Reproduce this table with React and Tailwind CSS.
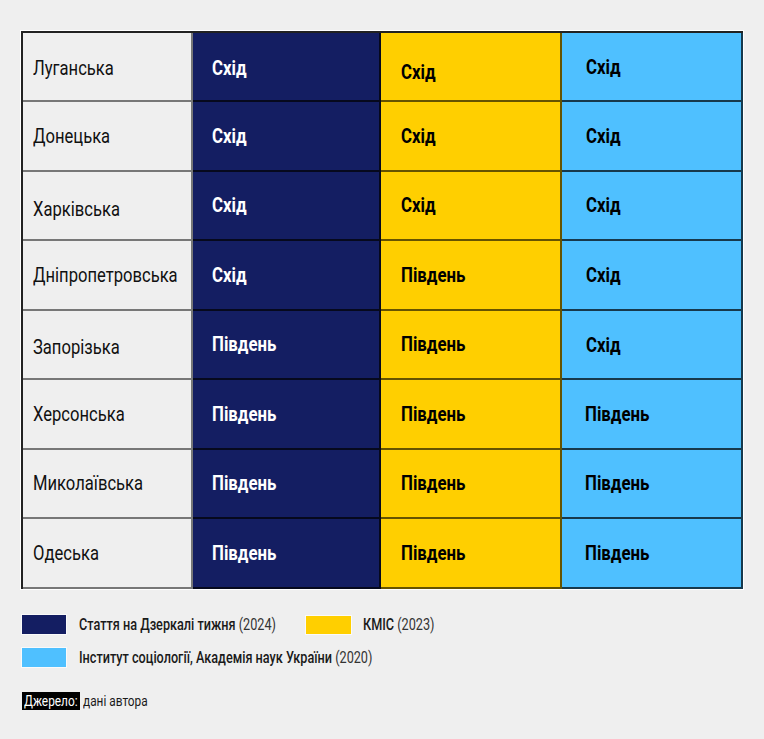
import React from "react";

const rows = [
  { name: "Луганська", a: "Схід", b: "Схід", c: "Схід", n: "pt-[3px]", sa: "pt-[3px]", sb: "pt-[12px]", sc: "pt-[2px]" },
  { name: "Донецька", a: "Схід", b: "Схід", c: "Схід", n: "", sa: "", sb: "", sc: "" },
  { name: "Харківська", a: "Схід", b: "Схід", c: "Схід", n: "pt-[7px]", sa: "", sb: "", sc: "" },
  { name: "Дніпропетровська", a: "Схід", b: "Південь", c: "Схід", n: "", sa: "", sb: "", sc: "" },
  { name: "Запорізька", a: "Південь", b: "Південь", c: "Схід", n: "pt-[5px]", sa: "", sb: "", sc: "pt-[2px]" },
  { name: "Херсонська", a: "Південь", b: "Південь", c: "Південь", n: "", sa: "", sb: "", sc: "" },
  { name: "Миколаївська", a: "Південь", b: "Південь", c: "Південь", n: "", sa: "", sb: "", sc: "" },
  { name: "Одеська", a: "Південь", b: "Південь", c: "Південь", n: "", sa: "", sb: "", sc: "" },
];

const heights = ["h-[69px]", "h-[70px]", "h-[69px]", "h-[70px]", "h-[69px]", "h-[70px]", "h-[69px]", "h-[70px]"];

function Cond({ children, kind = "reg" }) {
  const s = kind === "bold" ? "scale-x-[0.80]" : kind === "legend" ? "scale-x-[0.745]" : "scale-x-[0.79]";
  return <span className={"inline-block origin-left whitespace-nowrap " + s}>{children}</span>;
}

export default function App() {
  return (
    <div
      className="w-[764px] h-[739px] bg-[#efefef] pt-[31px] pl-[21px]"
      style={{ fontFamily: "Roboto, 'Liberation Sans', sans-serif" }}
    >
      <div className="w-[722px] border-l-2 border-t-2 border-[#222] ring-1 ring-white grid grid-cols-[170px_188px_181px_181px]">
        {rows.map((r, i) => (
          <React.Fragment key={r.name}>
            <div className={`${heights[i]} ${r.n} bg-[#efefef] border-r-2 border-b-2 border-black/50 flex items-center pl-[10px] text-[21px] text-[#111] leading-none`}>
              <Cond>{r.name}</Cond>
            </div>
            <div className={`${heights[i]} ${r.sa} bg-[#141e62] border-r-2 border-b-2 border-black/70 flex items-center pl-[19px] text-[21px] font-bold text-white leading-none`}>
              <Cond kind="bold">{r.a}</Cond>
            </div>
            <div className={`${heights[i]} ${r.sb} bg-[#ffcf00] border-r-2 border-b-2 border-black/60 flex items-center pl-[20px] text-[21px] font-bold text-black leading-none`}>
              <Cond kind="bold">{r.b}</Cond>
            </div>
            <div className={`${heights[i]} ${r.sc} bg-[#4fc0ff] border-r-2 border-b-2 border-black/70 flex items-center ${r.c === "Схід" ? "pl-[24px]" : "pl-[23px]"} text-[21px] font-bold text-black leading-none`}>
              <Cond kind="bold">{r.c}</Cond>
            </div>
          </React.Fragment>
        ))}
      </div>

      <div className="mt-[26px] flex flex-col gap-[14px] text-[17px] text-[#1a1a1a] leading-none">
        <div className="flex items-center">
          <div className="w-[44px] h-[19px] bg-[#141e62] ring-1 ring-white/70 ml-[1px]" />
          <div className="ml-[13px] w-[227px]">
            <Cond kind="legend">
              <span className="font-medium">Стаття на Дзеркалі тижня</span> <span className="text-[#333]">(2024)</span>
            </Cond>
          </div>
          <div className="w-[45px] h-[18px] bg-[#ffcf00] ring-1 ring-white/70" />
          <div className="ml-[12px]">
            <Cond kind="legend">
              <span className="font-medium">КМІС</span> <span className="text-[#333]">(2023)</span>
            </Cond>
          </div>
        </div>
        <div className="flex items-center">
          <div className="w-[44px] h-[19px] bg-[#4fc0ff] ring-1 ring-white/70 ml-[1px]" />
          <div className="ml-[13px]">
            <Cond kind="legend">
              <span className="font-medium">Інститут соціології, Академія наук України</span> <span className="text-[#333]">(2020)</span>
            </Cond>
          </div>
        </div>
      </div>

      <div className="mt-[25px] flex items-center text-[15px] leading-none text-[#1a1a1a] ml-[1px]">
        <div className="bg-black text-white h-[18px] w-[58px] flex items-center pl-[2px] overflow-hidden">
          <Cond>Джерело:</Cond>
        </div>
        <div className="ml-[3px]">
          <Cond>дані автора</Cond>
        </div>
      </div>
    </div>
  );
}
